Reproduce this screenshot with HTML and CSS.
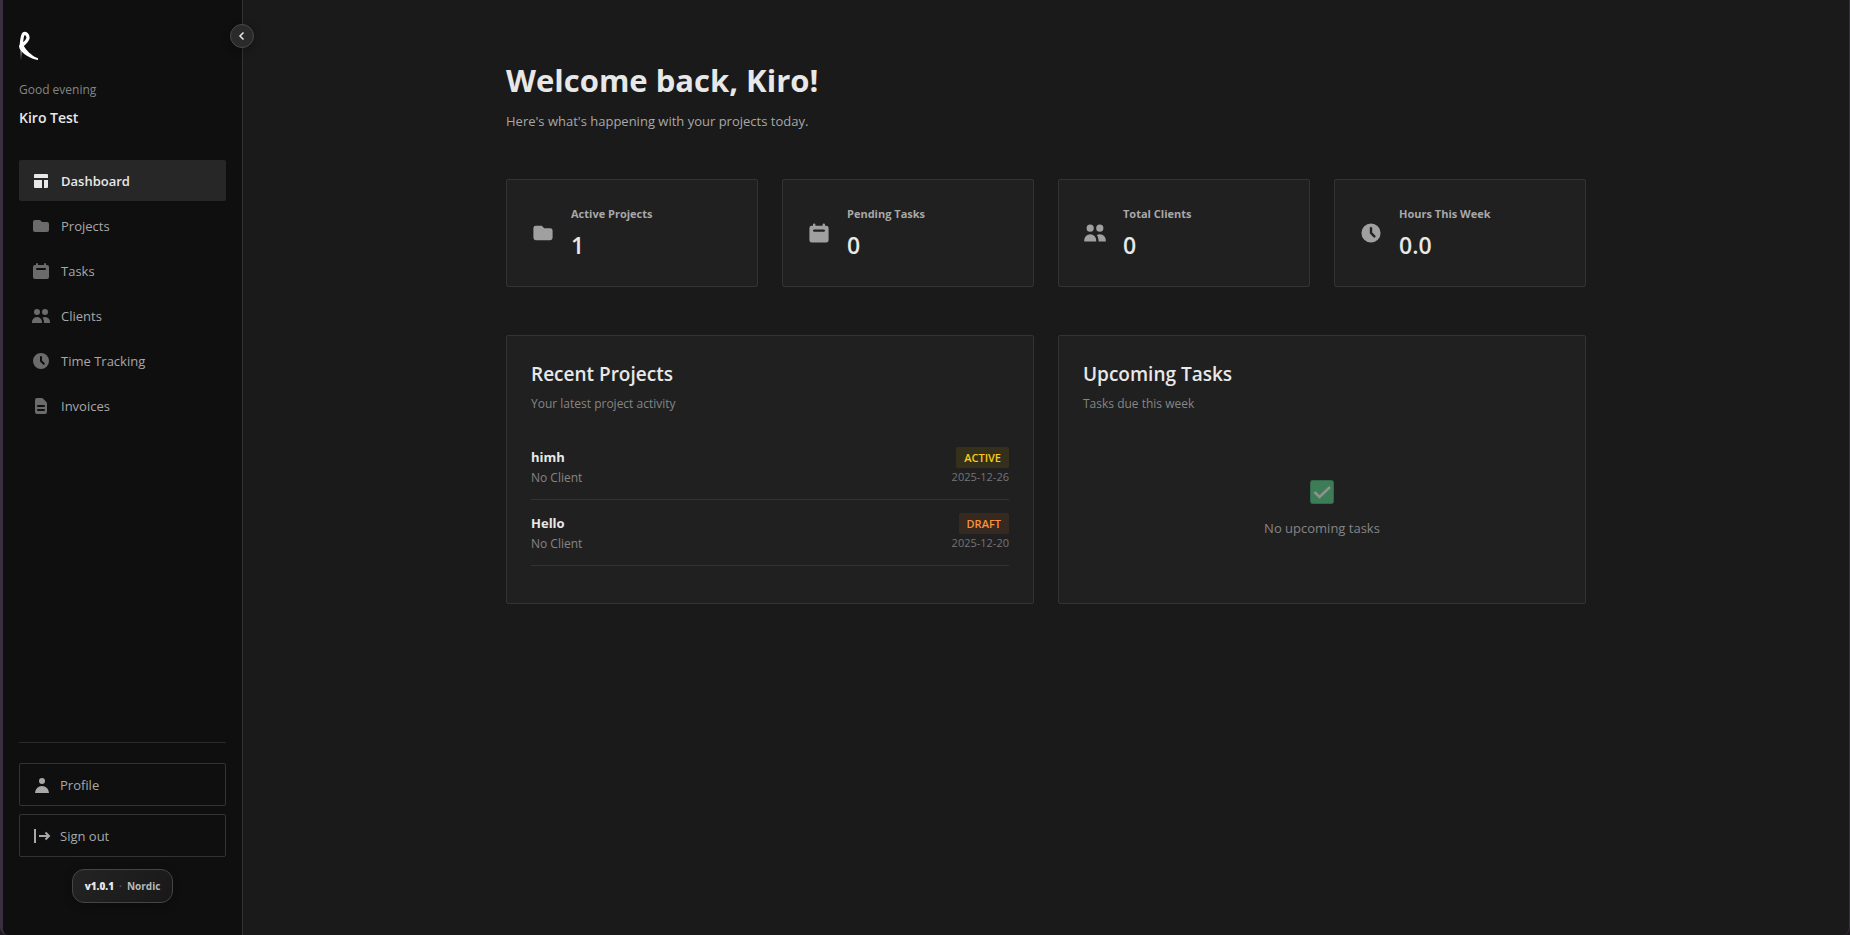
FILE: index.html
```html
<!DOCTYPE html>
<html lang="en">
<head>
  <meta charset="UTF-8">
  <meta name="viewport" content="width=device-width, initial-scale=1.0">
  <title>Dashboard</title>
  <link rel="stylesheet" href="styles.css">
</head>
<body>
  <!-- shared icons -->
  <svg class="sprite" aria-hidden="true">
    <symbol id="i-dashboard" viewBox="0 0 20 20">
      <path d="M4 3h12a1 1 0 0 1 1 1v3H3V4a1 1 0 0 1 1-1zM3 9h8v8H4a1 1 0 0 1-1-1zM13 9h4v7a1 1 0 0 1-1 1h-3z"/>
    </symbol>
    <symbol id="i-folder" viewBox="0 0 20 20">
      <path d="M2 6a2 2 0 0 1 2-2h5l2 2h5a2 2 0 0 1 2 2v6a2 2 0 0 1-2 2H4a2 2 0 0 1-2-2z"/>
    </symbol>
    <symbol id="i-calendar" viewBox="0 0 20 20">
      <path fill-rule="evenodd" d="M6 2a1 1 0 0 0-1 1v1H4a2 2 0 0 0-2 2v10a2 2 0 0 0 2 2h12a2 2 0 0 0 2-2V6a2 2 0 0 0-2-2h-1V3a1 1 0 1 0-2 0v1H7V3a1 1 0 0 0-1-1zm0 5a1 1 0 0 0 0 2h8a1 1 0 1 0 0-2z"/>
    </symbol>
    <symbol id="i-users" viewBox="0 0 20 20">
      <path d="M9 6a3 3 0 1 1-6 0 3 3 0 0 1 6 0zM17 6a3 3 0 1 1-6 0 3 3 0 0 1 6 0zM12.93 17c.05-.33.07-.66.07-1a6.97 6.97 0 0 0-1.5-4.33A5 5 0 0 1 19 16v1zM6 11a5 5 0 0 1 5 5v1H1v-1a5 5 0 0 1 5-5z"/>
    </symbol>
    <symbol id="i-clock" viewBox="0 0 20 20">
      <path fill-rule="evenodd" d="M10 18a8 8 0 1 0 0-16 8 8 0 0 0 0 16zm1-12a1 1 0 1 0-2 0v4a1 1 0 0 0 .29.71l2.83 2.83a1 1 0 0 0 1.42-1.42L11 9.59z"/>
    </symbol>
    <symbol id="i-invoice" viewBox="0 0 20 20">
      <path fill-rule="evenodd" d="M4 4a2 2 0 0 1 2-2h4.59A2 2 0 0 1 12 2.59L15.41 6A2 2 0 0 1 16 7.41V16a2 2 0 0 1-2 2H6a2 2 0 0 1-2-2zm2 6a1 1 0 0 1 1-1h6a1 1 0 1 1 0 2H7a1 1 0 0 1-1-1zm1 3a1 1 0 1 0 0 2h6a1 1 0 1 0 0-2z"/>
    </symbol>
    <symbol id="i-user" viewBox="0 0 20 20">
      <path d="M10 9a3 3 0 1 0 0-6 3 3 0 0 0 0 6zM3 18a7 7 0 0 1 14 0z"/>
    </symbol>
    <symbol id="i-signout" viewBox="0 0 20 20">
      <path d="M3 3v14M7 10h10M13.5 6.5L17 10l-3.5 3.5" fill="none" stroke="currentColor" stroke-width="2"/>
    </symbol>
  </svg>

  <div class="app">
    <aside class="sidebar">
      <button class="collapse" aria-label="Collapse sidebar">
        <svg viewBox="0 0 12 12"><path d="M7.5 2.5L4 6l3.5 3.5"/></svg>
      </button>

      <!-- brush-stroke mark: loop, leg, faint tail -->
      <svg class="logo" viewBox="0 0 20 30" aria-label="Logo">
        <path class="logo-loop" d="M2 16C2.600 12.500 2.600 4.500 4.700 2.700 6.500 1.700 9.200 3.800 9 7 8.600 10 5.500 12.500 2.200 15"/>
        <path d="M0 14.500L4 13.200C6 18 10.500 22.500 15.500 25.700l3.500 1.600v1.600l-2.500-.4C10 26.500 3.200 22.500.5 17.500z"/>
        <path class="logo-tail" d="M1.200 16l2 2.500L1.900 29z"/>
      </svg>
      <p class="greeting">Good evening</p>
      <p class="username">Kiro Test</p>

      <nav class="nav">
        <a class="nav-item active" href="#"><svg class="icon"><use href="#i-dashboard"/></svg>Dashboard</a>
        <a class="nav-item" href="#"><svg class="icon"><use href="#i-folder"/></svg>Projects</a>
        <a class="nav-item" href="#"><svg class="icon"><use href="#i-calendar"/></svg>Tasks</a>
        <a class="nav-item" href="#"><svg class="icon"><use href="#i-users"/></svg>Clients</a>
        <a class="nav-item" href="#"><svg class="icon"><use href="#i-clock"/></svg>Time Tracking</a>
        <a class="nav-item" href="#"><svg class="icon"><use href="#i-invoice"/></svg>Invoices</a>
      </nav>

      <div class="sidebar-footer">
        <button class="side-btn"><svg class="icon"><use href="#i-user"/></svg>Profile</button>
        <button class="side-btn"><svg class="icon"><use href="#i-signout"/></svg>Sign out</button>
        <div class="version"><strong>v1.0.1</strong><span class="dot">·</span><span>Nordic</span></div>
      </div>
    </aside>

    <main class="main">
      <div class="content">
        <header class="page-header">
          <h1>Welcome back, Kiro!</h1>
          <p>Here's what's happening with your projects today.</p>
        </header>

        <section class="stats">
          <div class="card stat">
            <svg class="stat-icon"><use href="#i-folder"/></svg>
            <div><div class="stat-label">Active Projects</div><div class="stat-value">1</div></div>
          </div>
          <div class="card stat">
            <svg class="stat-icon"><use href="#i-calendar"/></svg>
            <div><div class="stat-label">Pending Tasks</div><div class="stat-value">0</div></div>
          </div>
          <div class="card stat">
            <svg class="stat-icon"><use href="#i-users"/></svg>
            <div><div class="stat-label">Total Clients</div><div class="stat-value">0</div></div>
          </div>
          <div class="card stat">
            <svg class="stat-icon"><use href="#i-clock"/></svg>
            <div><div class="stat-label">Hours This Week</div><div class="stat-value">0.0</div></div>
          </div>
        </section>

        <section class="panels">
          <div class="card panel">
            <h2>Recent Projects</h2>
            <p class="panel-sub">Your latest project activity</p>
            <ul class="projects">
              <li class="project">
                <div>
                  <div class="project-name">himh</div>
                  <div class="project-client">No Client</div>
                </div>
                <div class="project-meta">
                  <span class="badge badge-active">ACTIVE</span>
                  <span class="project-date">2025-12-26</span>
                </div>
              </li>
              <li class="project">
                <div>
                  <div class="project-name">Hello</div>
                  <div class="project-client">No Client</div>
                </div>
                <div class="project-meta">
                  <span class="badge badge-draft">DRAFT</span>
                  <span class="project-date">2025-12-20</span>
                </div>
              </li>
            </ul>
          </div>
          <div class="card panel">
            <h2>Upcoming Tasks</h2>
            <p class="panel-sub">Tasks due this week</p>
            <div class="empty">
              <svg class="check" viewBox="0 0 24 24">
                <rect x=".5" y=".5" width="23" height="23" rx="2"/>
                <path d="M4.5 12l5 5L20 7"/>
              </svg>
              <p>No upcoming tasks</p>
            </div>
          </div>
        </section>
      </div>
    </main>
  </div>
</body>
</html>
```
FILE: styles.css
```css
* { box-sizing: border-box; }
body { margin: 0; background: #1e1a20; color: #e8e8e8; font-family: "Segoe UI", "Open Sans", "Noto Sans", sans-serif; font-size: 13px; line-height: 20px; }
h1, h2, p, ul { margin: 0; padding: 0; }
button { font: inherit; cursor: pointer; }
svg { fill: currentColor; flex-shrink: 0; }
.sprite { display: none; }

.app { display: flex; min-height: 100vh; background: #1a1a1a; border-left: 3px solid #3a2f3f; border-right: 1px solid #3a2f3f; border-radius: 0 0 8px 8px; }

/* sidebar */
.sidebar { position: relative; width: 240px; flex-shrink: 0; display: flex; flex-direction: column; padding: 31px 16px 32px; background: #0f0f0f; border-right: 1px solid #333; border-bottom-left-radius: 6px; }
.collapse { position: absolute; top: 24px; right: -12px; width: 24px; height: 24px; padding: 0; display: flex; align-items: center; justify-content: center; background: #2a2a2a; border: 1px solid #4a4a4a; border-radius: 50%; color: #e8e8e8; box-shadow: 0 2px 8px rgba(0, 0, 0, 0.3); }
.collapse svg { width: 12px; height: 12px; fill: none; stroke: currentColor; stroke-width: 1.5; }
.logo { width: 20px; height: 30px; color: #fff; }
.logo-loop { fill: none; stroke: currentColor; stroke-width: 3.2; }
.logo-tail { opacity: 0.5; }
.greeting { margin-top: 19px; font-size: 12px; color: #858585; }
.username { margin-top: 8px; font-size: 14px; font-weight: 600; }
.nav { display: flex; flex-direction: column; gap: 4px; margin-top: 32px; }
.nav-item { display: flex; align-items: center; gap: 10px; height: 41px; padding: 0 12px; border-radius: 2px; color: #a8a8a8; text-decoration: none; }
.nav-item .icon { color: #6b6b6b; }
.nav-item.active { background: #272727; color: #e8e8e8; font-weight: 600; }
.nav-item.active .icon { color: #e8e8e8; }
.icon { width: 20px; height: 20px; }
.sidebar-footer { display: flex; flex-direction: column; gap: 8px; margin-top: auto; padding-top: 20px; border-top: 1px solid #2a2a2a; }
.side-btn { display: flex; align-items: center; gap: 8px; height: 43px; padding: 0 12px; background: transparent; border: 1px solid #333; border-radius: 2px; color: #a8a8a8; }
.version { align-self: center; display: flex; align-items: center; gap: 5px; margin-top: 4px; height: 34px; padding: 0 12px; font-size: 10px; font-weight: 700; color: #b8b8b8; background: linear-gradient(135deg, #242424, #181818); border: 1px solid #454545; border-radius: 12px; box-shadow: 0 2px 8px rgba(0, 0, 0, 0.3); }
.version strong { color: #e8e8e8; }
.dot { color: #555; }

/* main */
.main { flex: 1; padding: 60px 32px; }
.content { max-width: 1080px; margin: 0 auto; }
.page-header h1 { font-size: 31px; line-height: 40px; font-weight: 700; }
.page-header p { margin-top: 11px; color: #a8a8a8; }
.card { background: #202020; border: 1px solid #333; border-radius: 2px; }

.stats { display: grid; grid-template-columns: repeat(4, 1fr); gap: 24px; margin-top: 48px; }
.stat { display: flex; align-items: center; gap: 16px; height: 108px; padding: 0 24px; }
.stat-icon { width: 24px; height: 24px; color: #a0a0a0; }
.stat-label { font-size: 11px; line-height: 18px; font-weight: 700; color: #a8a8a8; }
.stat-value { margin-top: 6px; font-size: 23px; line-height: 32px; font-weight: 600; }

.panels { display: grid; grid-template-columns: repeat(2, 1fr); gap: 24px; margin-top: 48px; }
.panel { min-height: 269px; padding: 24px; }
.panel h2 { font-size: 19px; line-height: 28px; font-weight: 600; }
.panel-sub { margin-top: 6px; font-size: 12px; color: #858585; }
.projects { list-style: none; margin-top: 20px; }
.project { display: flex; justify-content: space-between; height: 66px; padding: 13px 0; border-bottom: 1px solid #333; }
.project-name { font-weight: 700; }
.project-client { font-size: 12px; line-height: 22px; color: #858585; }
.project-meta { display: flex; flex-direction: column; align-items: flex-end; }
.badge { height: 21px; padding: 0 8px; font-size: 11px; line-height: 21px; font-weight: 600; border-radius: 2px; }
.badge-active { background: #35301c; color: #facc15; }
.badge-draft { background: #362a20; color: #fb923c; }
.project-date { font-size: 11px; line-height: 18px; color: #757575; }
.empty { display: flex; flex-direction: column; align-items: center; gap: 14px; margin-top: 66px; color: #858585; }
.check { width: 24px; height: 24px; }
.check rect { fill: #3c7d57; stroke: #32694a; }
.check path { fill: none; stroke: #909090; stroke-width: 2.5; }
```
